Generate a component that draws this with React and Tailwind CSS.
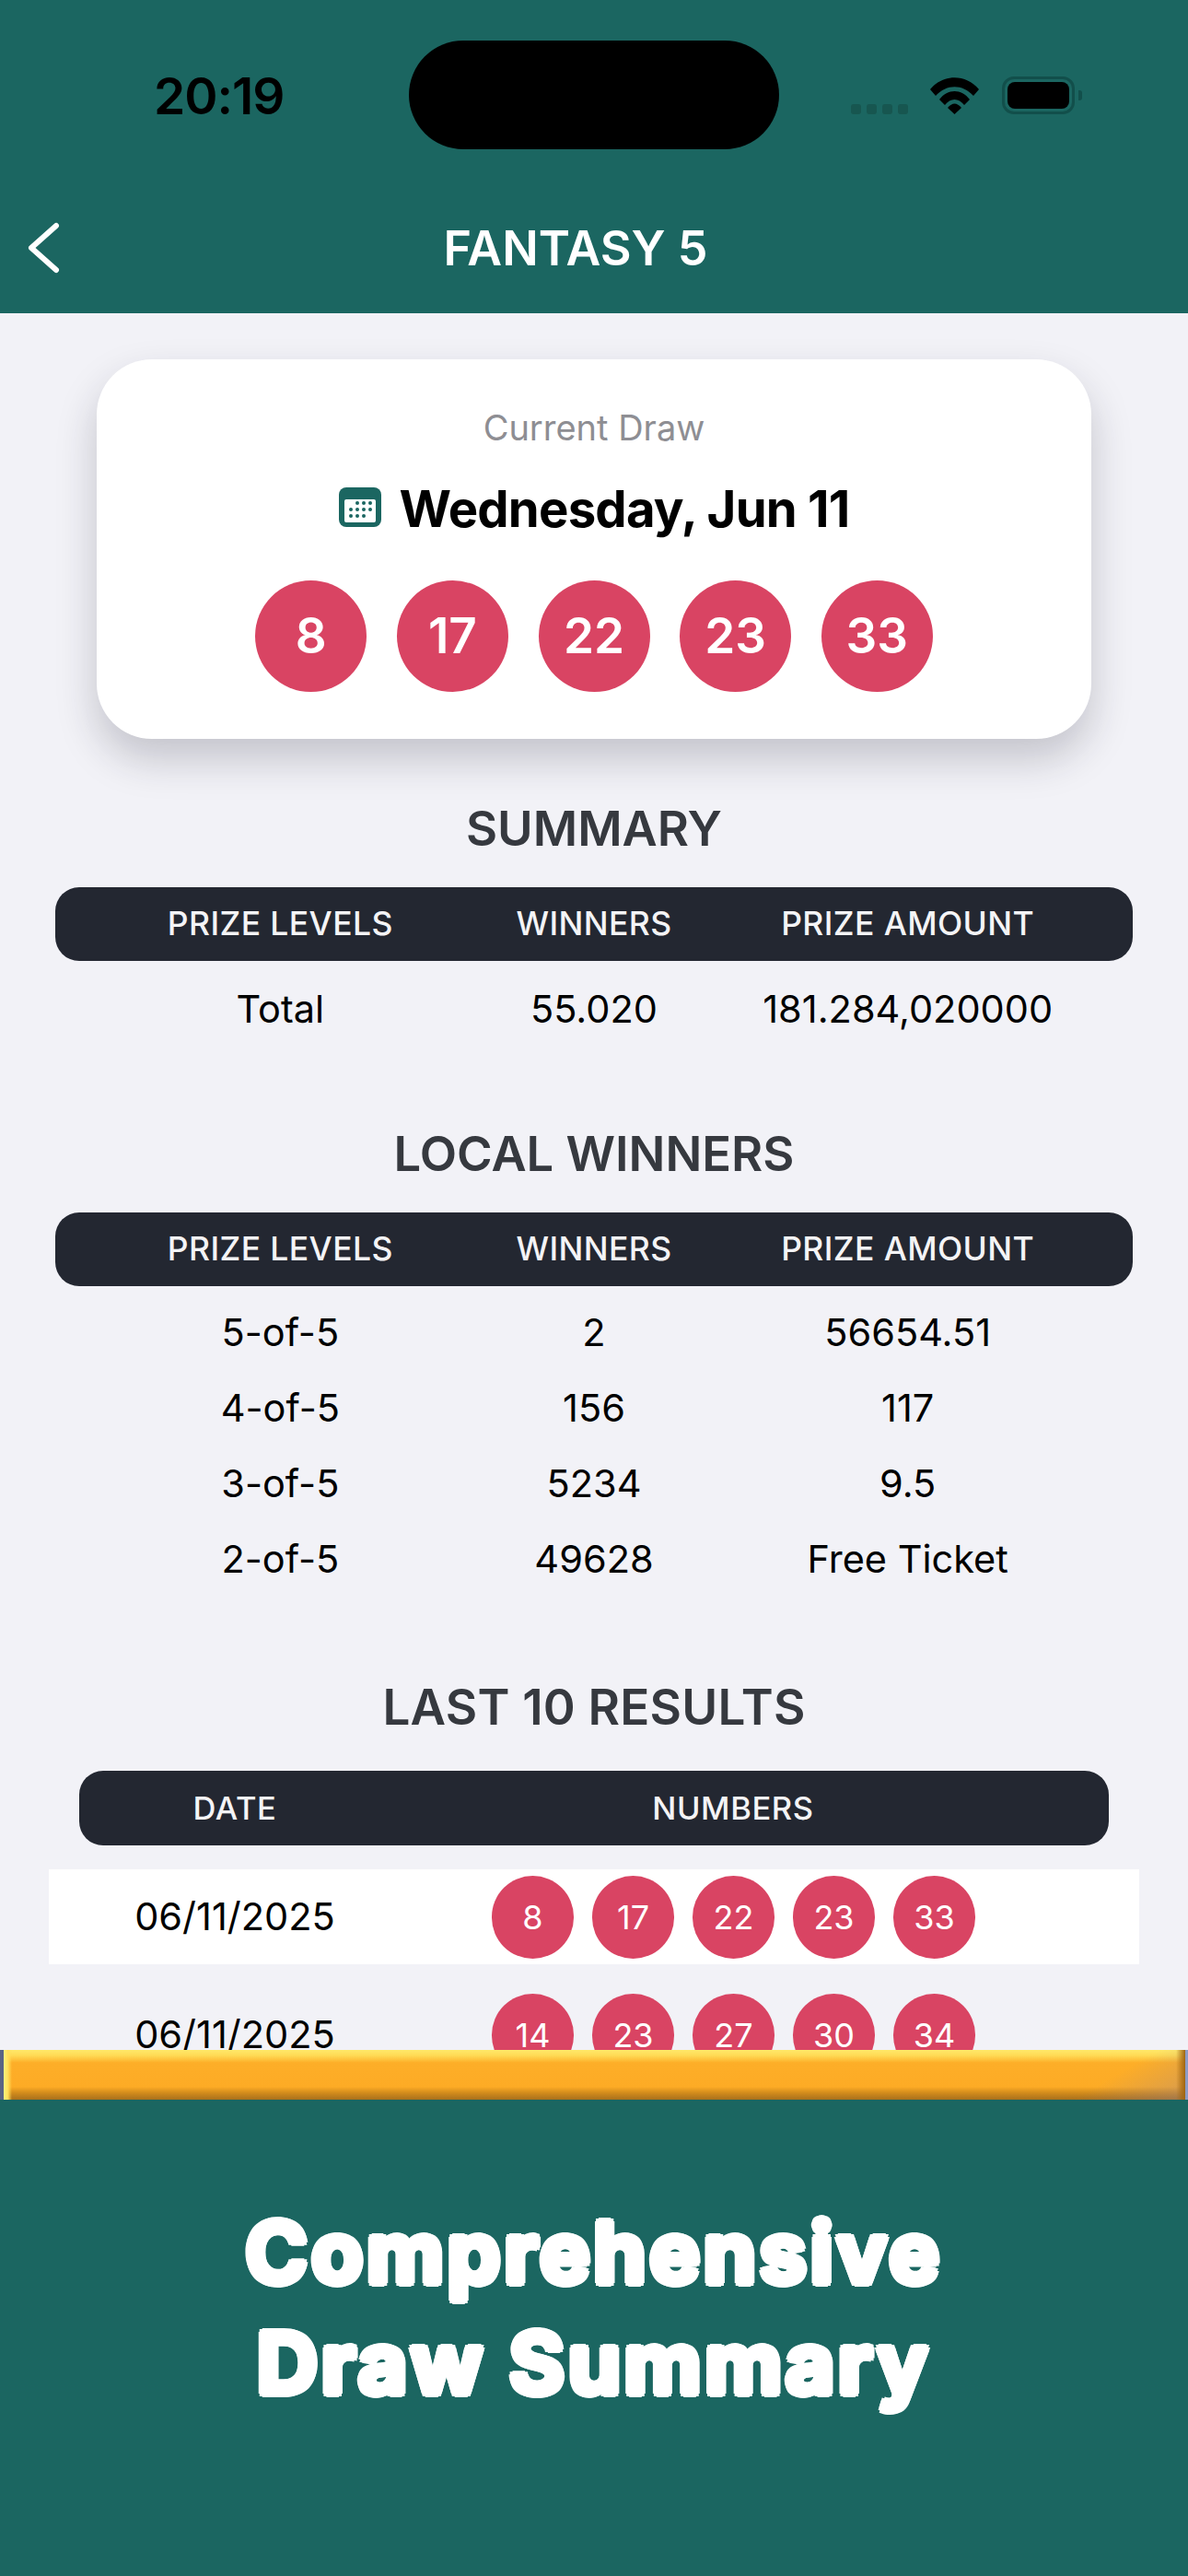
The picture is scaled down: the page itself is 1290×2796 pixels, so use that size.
import React from 'react';

const TEAL = 'bg-[#1b6661]';

const Ball = ({ n, big }) => (
  <div
    className={
      big
        ? 'flex h-[121px] w-[121px] items-center justify-center rounded-full bg-[#d94463] text-[53px] font-semibold text-white'
        : 'flex h-[90px] w-[89px] shrink-0 items-center justify-center rounded-full bg-[#d94463] text-[36px] text-white'
    }
  >
    {n}
  </div>
);

const TableHead = ({ cols }) => (
  <div className="mx-[60px] grid h-[80px] grid-cols-3 items-center rounded-[26px] bg-[#232731] px-[74px] text-center text-[35.5px] font-medium tracking-[0.4px] text-[#f4f4f6]">
    {cols.map((c) => (
      <div key={c}>{c}</div>
    ))}
  </div>
);

const Row = ({ cells }) => (
  <div className="mx-[60px] grid h-[82px] grid-cols-3 items-center px-[74px] text-center text-[41.5px] text-black">
    {cells.map((c, i) => (
      <div key={i} className="whitespace-nowrap">{c}</div>
    ))}
  </div>
);

const Heading = ({ children }) => (
  <h2 className="text-center text-[52.5px] font-semibold leading-[64px] text-[#36393f]">{children}</h2>
);

const COLS = ['PRIZE LEVELS', 'WINNERS', 'PRIZE AMOUNT'];

const App = () => {
  return (
    <div className="flex h-[2796px] w-[1290px] flex-col overflow-hidden bg-[#1b6661] font-['Inter',sans-serif]">
      {/* status bar + nav */}
      <header className={`${TEAL} relative h-[340px] shrink-0`}>
        <div className="flex h-[206px] items-start">
          <div className="ml-[167px] mt-[74px] w-[146px] text-[55px] font-semibold leading-[60px] tracking-[-1px] text-black">20:19</div>
          <div className="ml-[131px] mt-[44px] h-[118px] w-[402px] rounded-[59px] bg-black" />
          <div className="ml-[78px] mt-[83px] flex items-start">
            <div className="mt-[30px] flex gap-[6.5px]">
              <div className="h-[10.5px] w-[10.5px] rounded-[3px] bg-[#175650]" />
              <div className="h-[10.5px] w-[10.5px] rounded-[3px] bg-[#175650]" />
              <div className="h-[10.5px] w-[10.5px] rounded-[3px] bg-[#175650]" />
              <div className="h-[10.5px] w-[10.5px] rounded-[3px] bg-[#175650]" />
            </div>
            <svg className="ml-[24px] mt-[1px]" width="53" height="40" viewBox="0 0 53 40">
              <path d="M0 13 C14 -4 39 -4 53 13 L47 20 C35 7 18 7 6 20 Z" fill="#000" />
              <path d="M10 24 C19 12 34 12 43 24 L37 30 C31 22 22 22 16 30 Z" fill="#000" />
              <path d="M19 33 C24 27 29 27 34 33 L26.5 40 Z" fill="#000" />
            </svg>
            <div className="relative ml-[25px] flex h-[41px] w-[79px] items-center justify-center rounded-[13px] border-[3px] border-[#124f4b]">
              <div className="h-[29px] w-[67px] rounded-[8px] bg-black" />
              <div className="absolute -right-[11px] top-[12px] h-[11px] w-[4px] rounded-r-[3px] bg-[#124f4b]" />
            </div>
          </div>
        </div>
        <div className="relative flex h-[134px] items-start justify-center">
          <svg className="absolute left-[28px] top-[33px]" width="40" height="60" viewBox="0 0 40 60" fill="none" stroke="#fff" strokeWidth="6" strokeLinecap="round" strokeLinejoin="round">
            <path d="M33 6 L6 30 L33 54" />
          </svg>
          <div className="ml-[-40px] mt-[34px] text-[52px] font-semibold leading-[60px] text-white">FANTASY 5</div>
        </div>
      </header>

      {/* scrolling content */}
      <main className="h-[1885px] shrink-0 overflow-hidden bg-[#f2f2f7]">
        <section className="mx-[105px] mt-[50px] flex h-[412px] flex-col items-center rounded-[60px] bg-white pt-[52px] shadow-[0_22px_44px_rgba(30,30,50,0.22)]">
          <div className="text-[38px] leading-[44px] text-[#8e8e93]">Current Draw</div>
          <div className="mt-[34px] flex items-center gap-[20px]">
            <svg className="mt-[-4px]" width="46" height="43" viewBox="0 0 46 43">
              <rect width="46" height="43" rx="8" fill="#1b6661" />
              <rect x="6" y="13" width="34" height="25" rx="2" fill="#fff" />
              {[[20, 17], [27, 17], [34, 17], [13, 24], [20, 24], [27, 24], [34, 24], [13, 31], [20, 31], [27, 31]].map(([x, y]) => (
                <circle key={`${x}-${y}`} cx={x} cy={y} r="2" fill="#1b6661" />
              ))}
            </svg>
            <div className="text-[54.5px] font-bold leading-[64px] tracking-[-0.8px] text-black">Wednesday, Jun 11</div>
          </div>
          <div className="mt-[46px] flex gap-[32.6px]">
            {[8, 17, 22, 23, 33].map((n) => (
              <Ball key={n} n={n} big />
            ))}
          </div>
        </section>

        <div className="mt-[65px]">
          <Heading>SUMMARY</Heading>
        </div>
        <div className="mt-[32px]">
          <TableHead cols={COLS} />
        </div>
        <div className="mt-[11px]">
          <Row cells={['Total', '55.020', '181.284,020000']} />
        </div>

        <div className="mt-[84px]">
          <Heading>LOCAL WINNERS</Heading>
        </div>
        <div className="mt-[32px]">
          <TableHead cols={COLS} />
        </div>
        <div className="mt-[9px]">
          <Row cells={['5-of-5', '2', '56654.51']} />
          <Row cells={['4-of-5', '156', '117']} />
          <Row cells={['3-of-5', '5234', '9.5']} />
          <Row cells={['2-of-5', '49628', 'Free Ticket']} />
        </div>

        <div className="mt-[88px]">
          <h2 className="text-center text-[53px] font-semibold leading-[64px] tracking-[0.2px] text-[#36393f]">LAST 10 RESULTS</h2>
        </div>
        <div className="mx-[86px] mt-[37px] flex h-[81px] items-center rounded-[26px] bg-[#232731] text-[34.5px] font-medium tracking-[0.6px] text-[#f4f4f6]">
          <div className="w-[338px] text-center">DATE</div>
          <div className="w-[744px] text-center">NUMBERS</div>
        </div>
        <div className="mx-[53px] mt-[26px] flex h-[103px] items-center bg-white">
          <div className="w-[404px] text-center text-[41.5px] text-black">06/11/2025</div>
          <div className="ml-[77px] flex gap-[20px]">
            {[8, 17, 22, 23, 33].map((n) => (
              <Ball key={n} n={n} />
            ))}
          </div>
        </div>
        <div className="mx-[53px] mt-[25px] flex h-[103px] items-center">
          <div className="w-[404px] text-center text-[41.5px] text-black">06/11/2025</div>
          <div className="ml-[77px] flex gap-[20px]">
            {[14, 23, 27, 30, 34].map((n) => (
              <Ball key={n} n={n} />
            ))}
          </div>
        </div>
      </main>

      {/* the orange strip, a stretched banner */}
      <div className="relative h-[54px] shrink-0 bg-[linear-gradient(180deg,#ffe869_0px,#ffdb55_6px,#fdae28_14px,#fdab25_40px,#d08a1c_47px,#a9701c_54px)]">
        <div className="absolute inset-y-0 right-0 w-1/4 bg-[linear-gradient(150deg,transparent_70%,rgba(150,130,150,0.4))]" />
        <div className="absolute inset-y-0 left-0 w-[4px] bg-[#5a6484]" />
        <div className="absolute inset-y-0 left-[4px] w-[9px] bg-[linear-gradient(90deg,#fff27d,#ffdf5a,transparent)]" />
        <div className="absolute inset-y-0 right-[3px] w-[10px] bg-[linear-gradient(90deg,transparent,#a0650f)]" />
        <div className="absolute inset-y-0 right-0 w-[3px] bg-[#8d9bc4]" />
      </div>

      <footer className="flex flex-1 flex-col items-center pt-[106px] text-[92px] font-bold leading-[120px] tracking-[3.6px] text-white [text-shadow:4px_0_#fff,-4px_0_#fff,0_4px_#fff,0_-4px_#fff,3px_3px_#fff,-3px_3px_#fff,3px_-3px_#fff,-3px_-3px_#fff,2px_0_#fff,-2px_0_#fff,0_2px_#fff,0_-2px_#fff]">
        <div>Comprehensive</div>
        <div>Draw Summary</div>
      </footer>
    </div>
  );
};

export default App;
